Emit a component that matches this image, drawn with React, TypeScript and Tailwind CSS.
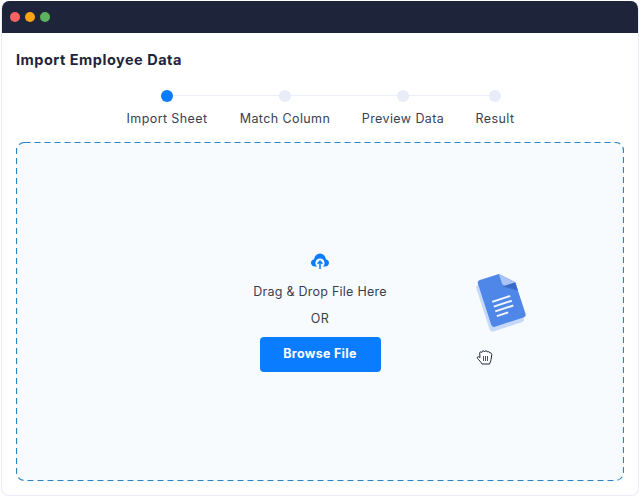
const steps = [
  { label: "Import Sheet", w: "w-[81px]", active: true },
  { label: "Match Column", w: "w-[91px]", active: false },
  { label: "Preview Data", w: "w-[81px]", active: false },
  { label: "Result", w: "w-[39px]", active: false },
];

function CloudUpload() {
  return (
    <svg width="20" height="18" viewBox="0 0 20 18" aria-hidden="true">
      <path
        fill="#0a7cff"
        d="M5 14.500C2.600 14.500 1 12.900 1 10.800c0-1.900 1.300-3.300 3.100-3.600C4.600 4 7 1.500 10 1.500s5.400 2.500 5.900 5.700c1.800.3 3.100 1.700 3.100 3.600 0 2.100-1.600 3.700-4 3.700z"
      />
      <circle cx="10" cy="11" r="4.600" fill="#f8fbfd" />
      <path d="M10 17V9.500M7.600 11.800 10 9.200l2.400 2.600" fill="none" stroke="#0a7cff" strokeWidth="1.500" />
    </svg>
  );
}

function DocIcon() {
  const body = "M3 0H23L36 13V46a3 3 0 0 1-3 3H3a3 3 0 0 1-3-3V3a3 3 0 0 1 3-3z";
  return (
    <svg width="60" height="70" viewBox="0 0 60 70" aria-hidden="true">
      <g transform="translate(7 12) rotate(-18)">
        <path d={body} transform="translate(-3 4)" fill="#c7d9fb" />
        <path d={body} fill="#4f87e8" />
        <path d="M23 13H36V22z" fill="#3a6bc9" />
        <path d="M23 0L36 13H26a3 3 0 0 1-3-3z" fill="#a9c4f5" />
        <path d="M8 24.500H27M8 29.500H27M8 34.500H27M8 39.500H20" stroke="#f2f6fe" strokeWidth="2" />
      </g>
    </svg>
  );
}

function HandCursor() {
  return (
    <svg width="18" height="16" viewBox="0 0 18 16" aria-hidden="true">
      <path
        d="M6 15C5 13 3 11 1.500 9.500C.8 8.500 1.500 7.500 2.800 7.800L4 8.600L3.700 4C3.700 2.700 5.300 2.500 5.700 3.500C6 1.400 8 1.400 8.500 2.800C9 1.300 11 1.400 11.200 3C12 2.300 13.700 2.700 13.800 4C14.800 3.600 16 4.300 15.800 5.500L15 10.500C14.800 12.500 14 13.500 13.500 15Z"
        fill="#fff"
        stroke="#1e253a"
        strokeWidth="1"
        strokeLinejoin="round"
      />
      <path d="M7.500 7V12M9.500 7V12M11.500 7V12" stroke="#1e253a" strokeWidth="0.800" />
    </svg>
  );
}

export default function App() {
  return (
    <div className="h-[497px] w-[640px] bg-white p-px font-['Inter','Liberation_Sans',sans-serif] text-[#2b3040]">
      <div className="flex h-[495px] w-[638px] flex-col overflow-hidden rounded-lg border border-t-0 border-[#e9ebf6] bg-white">
        <header className="flex h-8 shrink-0 items-center gap-[5px] bg-[#1e253a] px-[8px]">
          <span className="h-[10px] w-[10px] rounded-full bg-[#f96262]" />
          <span className="h-[10px] w-[10px] rounded-full bg-[#fca311]" />
          <span className="h-[10px] w-[10px] rounded-full bg-[#5cb25d]" />
        </header>
        <main className="flex min-h-0 flex-1 flex-col px-[14px] pb-[13px]">
          <h1 className="mt-[17px] h-5 text-[14.500px] leading-5 font-bold tracking-[0.5px] text-[#1e253a]">
            Import Employee Data
          </h1>
          <div className="relative mt-[20px] flex justify-center gap-8 pl-px">
            <div className="absolute top-[5px] right-[130px] left-[151px] h-px bg-[#eceef8]" />
            {steps.map((s) => (
              <div key={s.label} className={`relative flex shrink-0 flex-col items-center ${s.w}`}>
                <span className={`h-3 w-3 rounded-full ${s.active ? "bg-[#0a7cff]" : "bg-[#e8ebf8]"}`} />
                <span className="mt-[8px] text-[12.500px] leading-[18px] font-normal tracking-[0.4px] whitespace-nowrap text-[#3b4050]">
                  {s.label}
                </span>
              </div>
            ))}
          </div>
          <section className="relative mt-[14px] flex flex-1 flex-col items-center rounded-lg bg-[#f8fbfd] pt-[110px]">
            <svg className="absolute inset-0 h-full w-full" aria-hidden="true">
              <rect x="0.500" y="0.500" width="607" height="338" rx="8" fill="none" stroke="#2a86c6" strokeWidth="1.200" strokeDasharray="6 4" />
            </svg>
            <CloudUpload />
            <p className="mt-[13px] text-[12.500px] leading-[18px] font-normal tracking-[0.25px] text-[#3b4050]">Drag &amp; Drop File Here</p>
            <p className="mt-[9px] text-[12.500px] leading-[18px] font-normal tracking-[0.4px] text-[#3b4050]">OR</p>
            <button className="mt-[9px] h-[35px] w-[121px] rounded bg-[#0a7cff] text-[12.500px] font-bold tracking-[0.3px] text-white">
              Browse File
            </button>
            <div className="absolute top-[127px] left-[454px]">
              <DocIcon />
            </div>
            <div className="absolute top-[207px] left-[460px]">
              <HandCursor />
            </div>
          </section>
        </main>
      </div>
    </div>
  );
}
